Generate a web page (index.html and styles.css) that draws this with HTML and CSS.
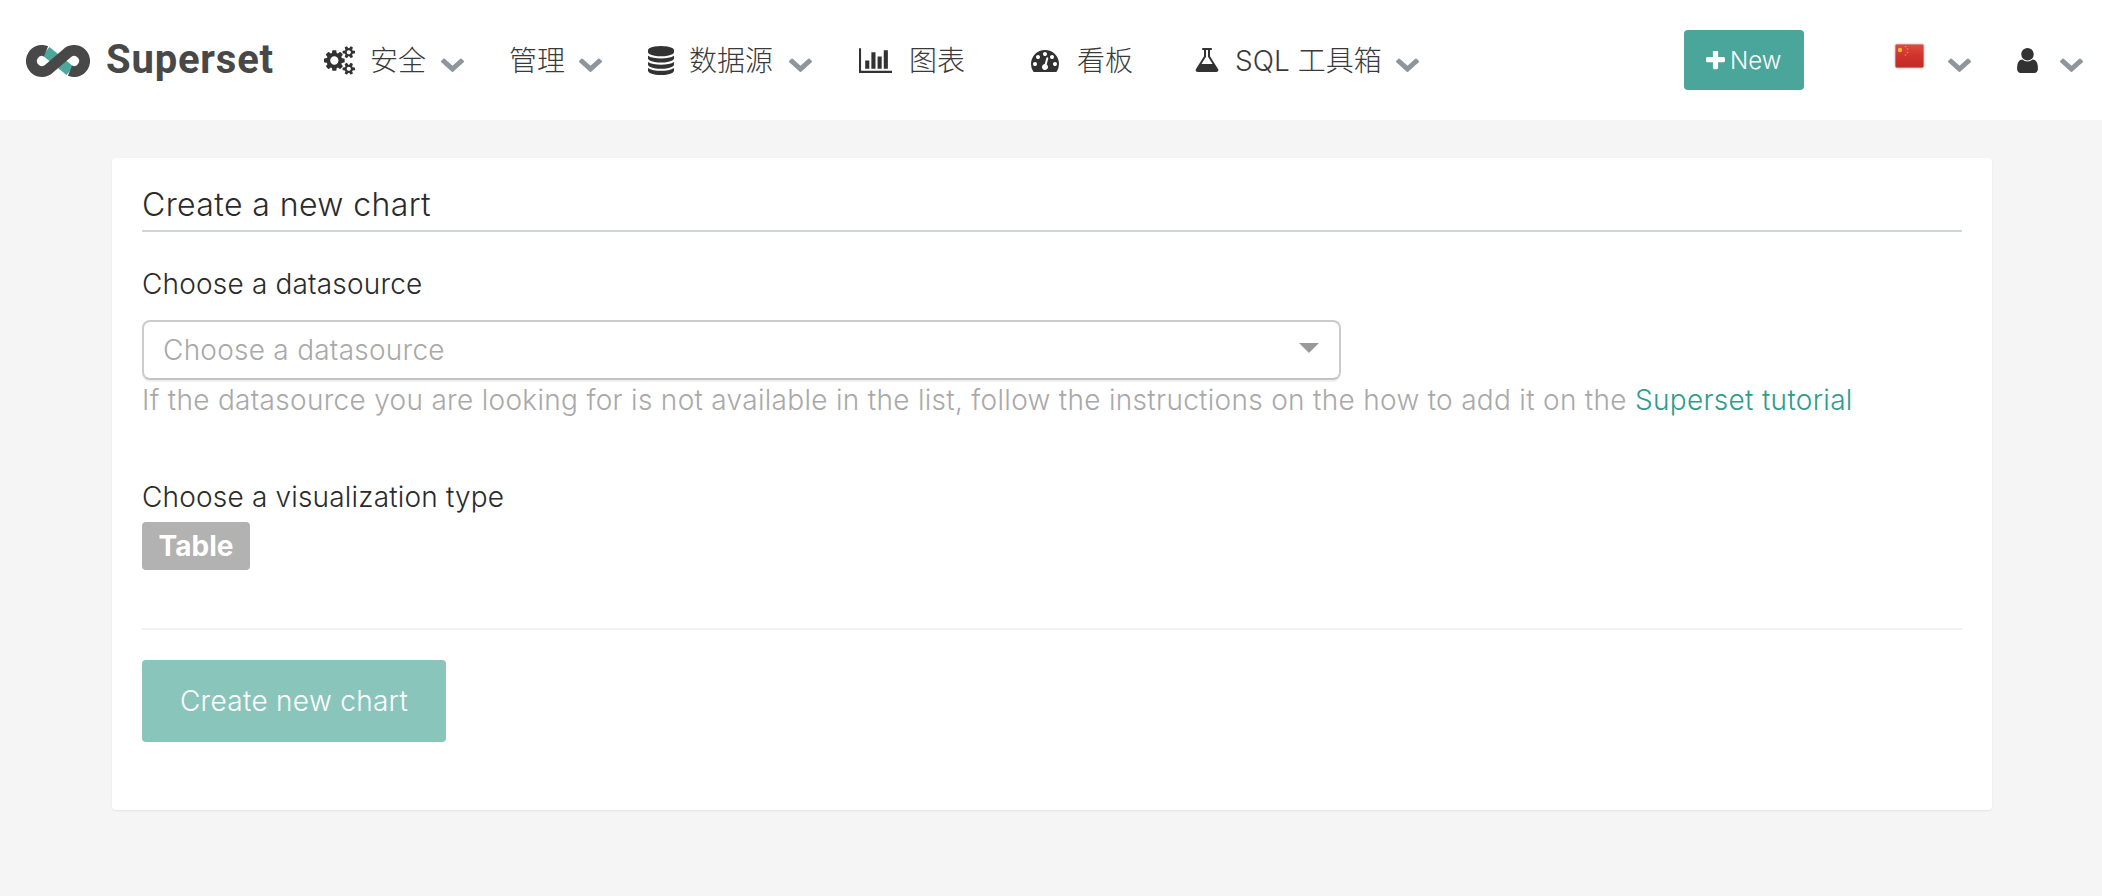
FILE: index.html
```html
<!DOCTYPE html>
<html lang="zh">
<head>
<meta charset="utf-8">
<title>Create a new chart</title>
<link rel="stylesheet" href="styles.css">
</head>
<body>
<svg class="defs" width="0" height="0" aria-hidden="true">
  <defs>
    <linearGradient id="flag-red" x1="0" y1="0" x2="0" y2="1">
      <stop offset="0" stop-color="#dc4a3f"/>
      <stop offset=".5" stop-color="#cf332b"/>
      <stop offset="1" stop-color="#c22b26"/>
    </linearGradient>
  </defs>
  <symbol id="chev" viewBox="109 340 1574 1230" preserveAspectRatio="none"><path d="M1683 808l-742 741q-19 19-45 19t-45-19l-742-741q-19-19-19-45.500t19-45.500l166-165q19-19 45-19t45 19l531 531 531-531q19-19 45-19t45 19l166 165q19 19 19 45.500t-19 45.500z"/></symbol>
</svg>
<header class="nav">
  <a class="brand">
    <svg class="logo" viewBox="0 0 64 32">
      <path class="logo-teal" d="M20 6.300 L44 25.700"/>
      <path class="logo-dark" d="M20 6.300 A10.500 10.500 0 1 0 23.400 23.400 L40.600 8.600 A10.500 10.500 0 1 1 44 25.700"/>
    </svg>
    <span class="brand-name">Superset</span>
  </a>
  <a class="item item-sec">
    <svg class="ico ico-cogs" viewBox="0 0 1920 1792"><path d="M896 896q0-106-75-181t-181-75-181 75-75 181 75 181 181 75 181-75 75-181zm768 512q0-52-38-90t-90-38-90 38-38 90q0 53 37.500 90.500t90.500 37.500 90.500-37.500 37.500-90.500zm0-1024q0-52-38-90t-90-38-90 38-38 90q0 53 37.500 90.500t90.500 37.500 90.500-37.500 37.500-90.500zm-384 421v185q0 10-7 19.500t-16 10.500l-155 24q-11 35-32 76 34 48 90 115 7 11 7 20 0 12-7 19-23 30-82.500 89.500t-78.500 59.500q-11 0-21-7l-115-90q-37 19-77 31-11 108-23 155-7 24-30 24h-186q-11 0-20-7.500t-10-17.500l-23-153q-34-10-75-31l-118 89q-7 7-20 7-11 0-21-8-144-133-144-160 0-9 7-19 10-14 41-53t47-61q-23-44-35-82l-152-24q-10-1-17-9.500t-7-19.500v-185q0-10 7-19.500t16-10.500l155-24q11-35 32-76-34-48-90-115-7-11-7-20 0-12 7-20 22-30 82-89t79-59q11 0 21 7l115 90q34-18 77-32 11-108 23-154 7-24 30-24h186q11 0 20 7.500t10 17.500l23 153q34 10 75 31l118-89q8-7 20-7 11 0 21 8 144 133 144 160 0 8-7 19-12 16-42 54t-45 60q23 48 34 82l152 23q10 2 17 10.500t7 19.500zm640 533v140q0 16-149 31-12 27-30 52 51 113 51 138 0 4-4 7-122 71-124 71-8 0-46-47t-52-68q-20 2-30 2t-30-2q-14 21-52 68t-46 47q-2 0-124-71-4-3-4-7 0-25 51-138-18-25-30-52-149-15-149-31v-140q0-16 149-31 13-29 30-52-51-113-51-138 0-4 4-7 4-2 35-20t59-34 30-16q8 0 46 46.500t52 67.500q20-2 30-2t30 2q51-71 92-112l6-2q4 0 124 70 4 3 4 7 0 25-51 138 17 23 30 52 149 15 149 31zm0-1024v140q0 16-149 31-12 27-30 52 51 113 51 138 0 4-4 7-122 71-124 71-8 0-46-47t-52-68q-20 2-30 2t-30-2q-14 21-52 68t-46 47q-2 0-124-71-4-3-4-7 0-25 51-138-18-25-30-52-149-15-149-31v-140q0-16 149-31 13-29 30-52-51-113-51-138 0-4 4-7 4-2 35-20t59-34 30-16q8 0 46 46.500t52 67.500q20-2 30-2t30 2q51-71 92-112l6-2q4 0 124 70 4 3 4 7 0 25-51 138 17 23 30 52 149 15 149 31z"/></svg>
    <span class="lbl">安全</span>
    <svg class="chev"><use href="#chev"/></svg>
  </a>
  <a class="item item-mgr">
    <span class="lbl">管理</span>
    <svg class="chev"><use href="#chev"/></svg>
  </a>
  <a class="item item-db">
    <svg class="ico ico-db" viewBox="128 0 1536 1792" preserveAspectRatio="none"><path d="M896 768q237 0 443-43t325-127v170q0 69-103 128t-280 93.500-385 34.500-385-34.500-280-93.500-103-128v-170q119 84 325 127t443 43zm0 768q237 0 443-43t325-127v170q0 69-103 128t-280 93.500-385 34.500-385-34.500-280-93.500-103-128v-170q119 84 325 127t443 43zm0-384q237 0 443-43t325-127v170q0 69-103 128t-280 93.500-385 34.500-385-34.500-280-93.500-103-128v-170q119 84 325 127t443 43zm0-1152q208 0 385 34.500t280 93.500 103 128v128q0 69-103 128t-280 93.500-385 34.500-385-34.500-280-93.500-103-128v-128q0-69 103-128t280-93.500 385-34.500z"/></svg>
    <span class="lbl">数据源</span>
    <svg class="chev"><use href="#chev"/></svg>
  </a>
  <a class="item item-chart">
    <svg class="ico ico-chart" viewBox="0 128 2048 1536"><path d="M640 896v512h-256v-512h256zm384-512v1024h-256v-1024h256zm1024 1152v128h-2048v-1536h128v1408h1920zm-640-896v768h-256v-768h256zm384-384v1152h-256v-1152h256z"/></svg>
    <span class="lbl">图表</span>
  </a>
  <a class="item item-dash">
    <svg class="ico ico-gauge" viewBox="0 128 1792 1536"><path d="M384 1152q0-53-37.500-90.500t-90.500-37.500-90.500 37.500-37.500 90.500 37.500 90.500 90.500 37.500 90.500-37.500 37.500-90.500zm192-448q0-53-37.500-90.500t-90.500-37.500-90.500 37.500-37.500 90.500 37.500 90.500 90.500 37.500 90.500-37.500 37.500-90.500zm428 481l101-382q6-26-7.500-48.500t-38.500-29.500-48 6.500-30 39.500l-101 382q-60 5-107 43.500t-63 98.500q-20 77 20 146t117 89 146-20 89-117q16-60-6-117t-72-91zm660-33q0-53-37.500-90.500t-90.500-37.500-90.500 37.500-37.500 90.500 37.500 90.500 90.500 37.500 90.500-37.500 37.500-90.500zm-640-640q0-53-37.500-90.500t-90.500-37.500-90.500 37.500-37.500 90.500 37.500 90.500 90.500 37.500 90.500-37.500 37.500-90.500zm448 192q0-53-37.500-90.500t-90.500-37.500-90.500 37.500-37.500 90.500 37.500 90.500 90.500 37.500 90.500-37.500 37.500-90.500zm320 448q0 261-141 483-19 29-54 29h-1402q-35 0-54-29-141-221-141-483 0-182 71-348t191-286 286-191 348-71 348 71 286 191 191 286 71 348z"/></svg>
    <span class="lbl">看板</span>
  </a>
  <a class="item item-sql">
    <svg class="ico ico-flask" viewBox="128 128 1536 1536"><path d="M1591 1448q56 89 21.500 152.500t-140.500 63.500h-1152q-106 0-140.500-63.500t21.500-152.500l503-793v-399h-64q-26 0-45-19t-19-45 19-45 45-19h512q26 0 45 19t19 45-19 45-45 19h-64v399zm-779-725l-272 429h712l-272-429-20-31v-437h-128v437z"/></svg>
    <span class="lbl">SQL 工具箱</span>
    <svg class="chev"><use href="#chev"/></svg>
  </a>
  <a class="btn-new">
    <svg class="plus" viewBox="192 192 1408 1408"><path d="M1600 736v192q0 40-28 68t-68 28h-416v416q0 40-28 68t-68 28h-192q-40 0-68-28t-28-68v-416h-416q-40 0-68-28t-28-68v-192q0-40 28-68t68-28h416v-416q0-40 28-68t68-28h192q40 0 68 28t28 68v416h416q40 0 68 28t28 68z"/></svg>
    <span>New</span>
  </a>
  <a class="item item-lang">
    <svg class="flag" viewBox="0 0 29 24">
      <rect x=".5" y=".5" width="28" height="23" rx="1" fill="url(#flag-red)"/>
      <circle cx="5" cy="6" r="2.200" fill="#e8b53c"/>
      <circle cx="10.500" cy="2.500" r=".8" fill="#e09a3c"/>
      <circle cx="12.500" cy="5" r=".8" fill="#e09a3c"/>
      <circle cx="12.500" cy="8.500" r=".8" fill="#e09a3c"/>
      <circle cx="10.500" cy="11" r=".8" fill="#e09a3c"/>
    </svg>
    <svg class="chev"><use href="#chev"/></svg>
  </a>
  <a class="item item-user">
    <svg class="ico ico-user" viewBox="256 128 1280 1536"><path d="M1536 1399q0 109-62.500 187t-150.500 78h-854q-88 0-150.500-78t-62.500-187q0-85 8.500-160.500t31.500-152 58.500-131 94-89 134.500-34.500q131 128 313 128t313-128q76 0 134.500 34.500t94 89 58.500 131 31.500 152 8.500 160.500zm-256-887q0 159-112.500 271.500t-271.500 112.500-271.500-112.500-112.500-271.500 112.500-271.500 271.500-112.500 271.500 112.500 112.500 271.500z"/></svg>
    <svg class="chev"><use href="#chev"/></svg>
  </a>
</header>
<main class="page">
  <section class="card">
    <h1 class="title">Create a new chart</h1>
    <div class="field">
      <label class="label">Choose a datasource</label>
      <div class="select">
        <span class="placeholder">Choose a datasource</span>
        <span class="caret"></span>
      </div>
      <p class="hint">If the datasource you are looking for is not available in the list, follow the instructions on the how to add it on the <a class="link">Superset tutorial</a></p>
    </div>
    <div class="field field-viz">
      <label class="label">Choose a visualization type</label>
      <span class="badge">Table</span>
    </div>
    <hr class="divider">
    <button class="btn-create" type="button">Create new chart</button>
  </section>
</main>
</body>
</html>
```
FILE: styles.css
```css
* { box-sizing: border-box; }
html, body { margin: 0; padding: 0; }
body {
  background: #f5f5f5;
  color: #2b2b2b;
  font-family: Inter, "Noto Sans CJK SC", sans-serif;
  min-height: 896px;
  overflow: hidden;
}
.defs { position: absolute; }

.nav {
  display: flex;
  align-items: center;
  height: 120px;
  background: #fff;
  padding-left: 26px;
}
.brand { display: flex; align-items: center; gap: 16px; width: 298px; }
.logo { width: 64px; height: 32px; margin-top: 1px; }
.logo-dark, .logo-teal { fill: none; stroke-width: 11; }
.logo-dark { stroke: #484848; stroke-linejoin: round; }
.logo-teal { stroke: #4ca89c; }
.brand-name {
  font-family: Roboto, sans-serif;
  font-weight: 700;
  font-size: 40px;
  letter-spacing: .8px;
  color: #484848;
  line-height: 1;
}
.item {
  display: flex;
  align-items: center;
  color: #3a3a3a;
  fill: #323232;
}
.lbl { font-size: 28px; font-weight: 300; line-height: 30px; white-space: nowrap; position: relative; top: 1px; }
.chev { width: 23px; height: 16px; fill: #8e969d; margin-top: 7px; }
.ico { flex: none; }
.ico-cogs { width: 31px; height: 29px; margin-right: 15px; }
.item-sec .chev { margin-left: 15px; }
.item-mgr { margin-left: 45px; }
.item-mgr .chev { margin-left: 14px; }
.item-db { margin-left: 46px; }
.ico-db { width: 26px; height: 29px; margin-right: 15px; }
.item-db .chev { margin-left: 16px; }
.item-chart { margin-left: 47px; }
.ico-chart { width: 33px; height: 25px; margin-right: 17px; }
.item-dash { margin-left: 66px; }
.ico-gauge { width: 28px; height: 24px; margin-right: 18px; }
.item-sql { margin-left: 62px; }
.ico-flask { width: 24px; height: 24px; margin-right: 16px; }
.item-sql .chev { margin-left: 14px; }

.btn-new {
  display: flex;
  align-items: center;
  justify-content: center;
  gap: 5px;
  width: 120px;
  height: 60px;
  margin-left: 265px;
  background: #4aa69a;
  border-radius: 4px;
  color: #fff;
  font-size: 24px;
  font-weight: 300;
}
.plus { width: 19px; height: 19px; fill: #fff; }
.item-lang { margin-left: 91px; }
.flag { width: 29px; height: 24px; margin: -8px 24px 0 0; filter: blur(.5px) drop-shadow(0 0 1px rgba(120,40,40,.6)); }
.item-user { margin-left: 46px; }
.ico-user { width: 21px; height: 25px; margin-right: 22px; }

.page { padding: 38px 110px 0 112px; }
.card {
  background: #fff;
  border-radius: 4px;
  box-shadow: 0 1px 2px rgba(0,0,0,.08);
  height: 652px;
  padding: 27px 30px 0;
}
.title {
  margin: 0;
  font-size: 32px;
  font-weight: 300;
  letter-spacing: .4px;
  line-height: 40px;
  padding-bottom: 5px;
  border-bottom: 2px solid #cfd5d8;
}
.field { margin-top: 34px; }
.label { display: block; font-size: 28px; font-weight: 300; letter-spacing: .18px; line-height: 36px; }
.select {
  display: flex;
  align-items: center;
  justify-content: space-between;
  width: 1199px;
  height: 60px;
  margin-top: 18px;
  padding: 0 20px;
  border: 2px solid #ccc;
  border-bottom-color: #c2c2c2;
  border-radius: 8px;
  box-shadow: 0 2px 0 rgba(0,0,0,.06);
}
.placeholder { font-size: 28px; font-weight: 300; letter-spacing: .25px; color: #a9a9a9; margin-left: -1px; }
.caret {
  width: 0;
  height: 0;
  border: 10px solid transparent;
  border-top: 10px solid #999;
  border-bottom: 0;
  margin-top: -4px;
}
.hint { margin: 2px 0 0; font-size: 28px; font-weight: 300; letter-spacing: .3px; line-height: 36px; color: #a9a9a9; }
.link { color: #2f9c8e; }
.field-viz { margin-top: 62px; }
.field-viz .label { line-height: 34px; }
.badge {
  display: flex;
  align-items: center;
  justify-content: center;
  width: 108px;
  height: 48px;
  margin-top: 8px;
  background: #b2b2b2;
  border-radius: 4px;
  color: #fff;
  font-size: 28px;
  font-weight: 700;
}
.divider { height: 2px; margin: 58px 0 30px; border: 0; background: #f1f1f1; }
.btn-create {
  display: block;
  width: 304px;
  height: 82px;
  background: #8ac5bc;
  border: 0;
  border-radius: 4px;
  color: #fff;
  font: 300 28px Inter, sans-serif;
  letter-spacing: .3px;
}
```
